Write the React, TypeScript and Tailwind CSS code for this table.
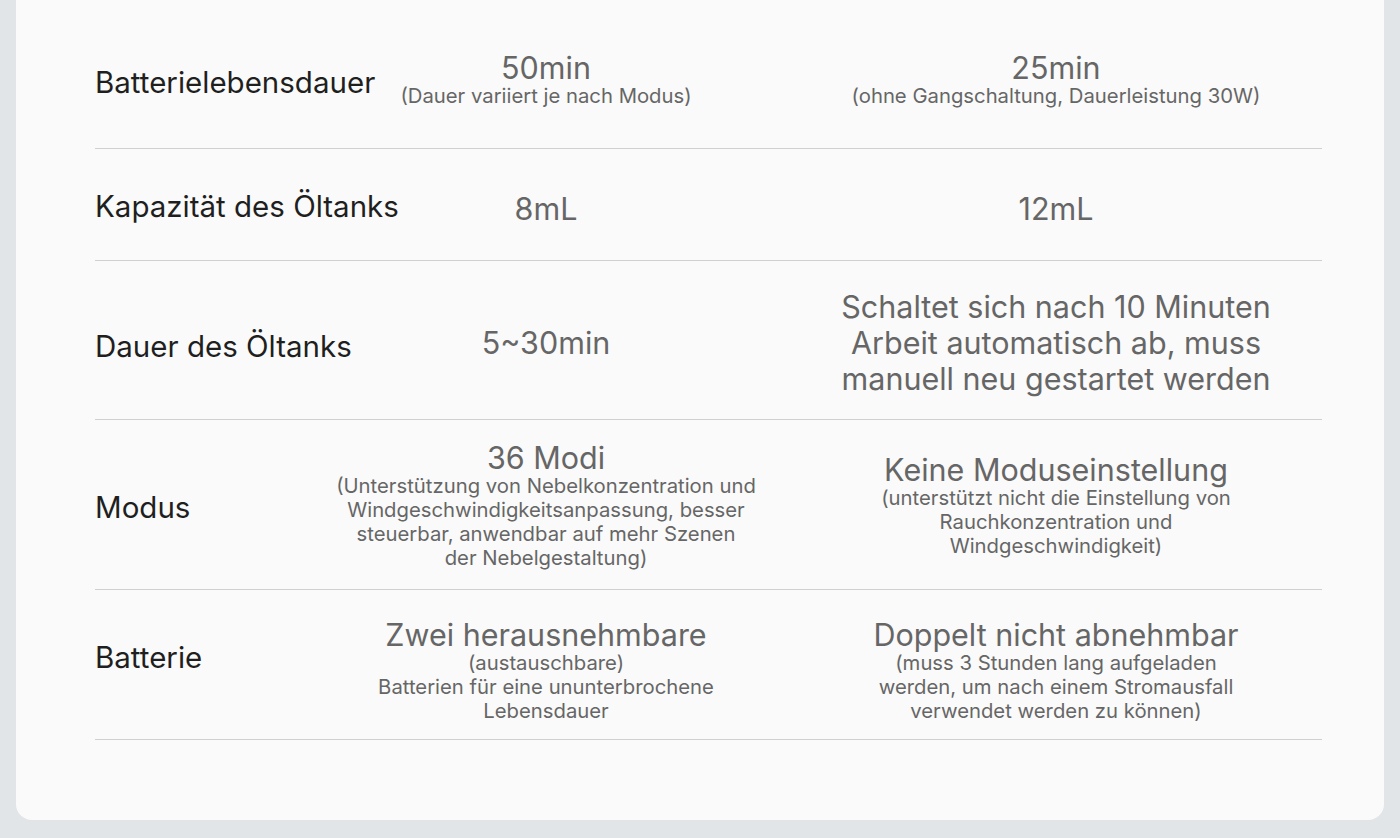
import React from "react";

type Val = { big: string[]; small?: string[] };
type Row = {
  label: string;
  h: string;
  ly: string;
  vy: string;
  a: Val;
  b: Val;
};

const rows: Row[] = [
  {
    label: "Batterielebensdauer",
    h: "h-[134px]",
    ly: "translate-y-0",
    vy: "-translate-y-[2px]",
    a: { big: ["50min"], small: ["(Dauer variiert je nach Modus)"] },
    b: { big: ["25min"], small: ["(ohne Gangschaltung, Dauerleistung 30W)"] },
  },
  {
    label: "Kapazität des Öltanks",
    h: "h-[112px]",
    ly: "translate-y-[1px]",
    vy: "translate-y-[4px]",
    a: { big: ["8mL"] },
    b: { big: ["12mL"] },
  },
  {
    label: "Dauer des Öltanks",
    h: "h-[159px]",
    ly: "translate-y-[6px]",
    vy: "translate-y-[3px]",
    a: { big: ["5~30min"] },
    b: {
      big: [
        "Schaltet sich nach 10 Minuten",
        "Arbeit automatisch ab, muss",
        "manuell neu gestartet werden",
      ],
    },
  },
  {
    label: "Modus",
    h: "h-[170px]",
    ly: "translate-y-[2px]",
    vy: "translate-y-[1px]",
    a: {
      big: ["36 Modi"],
      small: [
        "(Unterstützung von Nebelkonzentration und",
        "Windgeschwindigkeitsanpassung, besser",
        "steuerbar, anwendbar auf mehr Szenen",
        "der Nebelgestaltung)",
      ],
    },
    b: {
      big: ["Keine Moduseinstellung"],
      small: [
        "(unterstützt nicht die Einstellung von",
        "Rauchkonzentration und",
        "Windgeschwindigkeit)",
      ],
    },
  },
  {
    label: "Batterie",
    h: "h-[150px]",
    ly: "-translate-y-[8px]",
    vy: "translate-y-[6px]",
    a: {
      big: ["Zwei herausnehmbare"],
      small: ["(austauschbare)", "Batterien für eine ununterbrochene", "Lebensdauer"],
    },
    b: {
      big: ["Doppelt nicht abnehmbar"],
      small: [
        "(muss 3 Stunden lang aufgeladen",
        "werden, um nach einem Stromausfall",
        "verwendet werden zu können)",
      ],
    },
  },
];

function Cell({ v, vy }: { v: Val; vy: string }) {
  const bigLh = v.small ? "leading-[32px]" : "leading-[36px]";
  return (
    <div className={`flex flex-col items-center text-center text-[#666666] ${vy}`}>
      <div className={`text-[30.5px] ${bigLh}`}>
        {v.big.map((l, i) => (
          <div key={i} className="whitespace-nowrap">
            {l}
          </div>
        ))}
      </div>
      {v.small && (
        <div className="text-[20.3px] leading-[24px]">
          {v.small.map((l, i) => (
            <div key={i} className="whitespace-nowrap">
              {l}
            </div>
          ))}
        </div>
      )}
    </div>
  );
}

export default function App() {
  return (
    <div
      className="w-[1400px] h-[838px] bg-[#e2e5e8] px-4 pb-[18px]"
      style={{ fontFamily: "Inter, 'Noto Sans', sans-serif" }}
    >
      <div className="h-full bg-[#fafafa] rounded-b-2xl pl-[79px] pt-[15px]">
        <div className="w-[1227px]">
          {rows.map((r) => (
            <div
              key={r.label}
              className={`grid grid-cols-[196px_510px_510px] items-center border-b border-[#d0d0d0] ${r.h}`}
            >
              <div className={`whitespace-nowrap text-[29.5px] leading-[36px] text-[#1f1f1f] ${r.ly}`}>
                {r.label}
              </div>
              <Cell v={r.a} vy={r.vy} />
              <Cell v={r.b} vy={r.vy} />
            </div>
          ))}
        </div>
      </div>
    </div>
  );
}
